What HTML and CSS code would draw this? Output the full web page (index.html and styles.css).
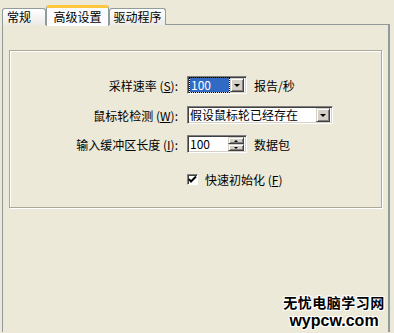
FILE: index.html
```html
<!DOCTYPE html>
<html lang="zh-CN">
<head>
    <meta charset="UTF-8">
    <meta name="viewport" content="width=device-width, initial-scale=1.0">
    <title>鼠标属性</title>
    <link rel="stylesheet" href="styles.css">
</head>
<body>
    <div class="tabs">
        <div class="tab first">常规</div>
        <div class="tab active">高级设置</div>
        <div class="tab last">驱动程序</div>
    </div>
    <div class="panel">
        <div class="group">
            <div class="row">
                <label class="label">采样速率 (<u>S</u>):</label>
                <div class="combo small">
                    <span class="value"><span class="sel">100</span></span>
                    <span class="drop"><i class="arrow-down"></i></span>
                </div>
                <span class="unit">报告/秒</span>
            </div>
            <div class="row">
                <label class="label">鼠标轮检测 (<u>W</u>):</label>
                <div class="combo wide">
                    <span class="value">假设鼠标轮已经存在</span>
                    <span class="drop"><i class="arrow-down"></i></span>
                </div>
            </div>
            <div class="row">
                <label class="label">输入缓冲区长度 (<u>I</u>):</label>
                <div class="combo small">
                    <span class="value">100</span>
                    <span class="spin">
                        <span class="spin-btn"><i class="arrow-up"></i></span>
                        <span class="spin-btn"><i class="arrow-down tiny"></i></span>
                    </span>
                </div>
                <span class="unit">数据包</span>
            </div>
            <div class="row check-row">
                <span class="checkbox">
                    <svg width="9" height="9" viewBox="0 0 9 9"><path d="M1 4 L3 6.5 L8 1.5" fill="none" stroke="#000" stroke-width="2"/></svg>
                </span>
                <span class="check-label">快速初始化 (<u>F</u>)</span>
            </div>
        </div>
    </div>
    <div class="watermark">
        <div class="wm-cn">无忧电脑学习网</div>
        <div class="wm-en">wypcw.com</div>
    </div>
</body>
</html>
```

FILE: styles.css
```css
body {
    margin: 0;
    width: 394px;
    height: 333px;
    overflow: hidden;
    position: relative;
    background-color: #ece9d8;
    font-family: "Noto Sans CJK SC", "DejaVu Sans", sans-serif;
    font-size: 12px;
    color: #000;
}

.tabs {
    display: flex;
    align-items: flex-end;
    height: 25px;
    padding-left: 2px;
    position: relative;
    z-index: 1;
}

.tab {
    height: 16px;
    line-height: 16px;
    box-sizing: content-box;
    border: 1px solid #919b9c;
    border-bottom: none;
    border-radius: 3px 3px 0 0;
    background: linear-gradient(#ffffff, #ecebe6);
    text-align: center;
}

.tab.first {
    width: 38px;
    padding-left: 4px;
    text-align: left;
}

.tab.last {
    width: 55px;
}

.tab.active {
    width: 61px;
    height: 18px;
    line-height: 18px;
    background-color: #fcfcfe;
    background-image: none;
    border-top: 3px solid #ffc83c;
    margin-bottom: -1px;
    position: relative;
    z-index: 2;
}

.panel {
    margin: -1px 4px 0 2px;
    height: 308px;
    border: 1px solid #919b9c;
    border-right: 2px solid #919b9c;
    border-bottom: none;
    padding-top: 25px;
    box-sizing: border-box;
}

.group {
    margin: 0 6px 0 6px;
    height: 158px;
    border: 1px solid #aca899;
    box-shadow: 1px 1px 0 #fff, inset 1px 1px 0 #fff;
    padding-top: 25px;
    box-sizing: border-box;
}

.row {
    display: flex;
    align-items: center;
    height: 18px;
    margin-bottom: 12px;
}

.row:nth-child(2) {
    margin-bottom: 11px;
}

.label {
    width: 177px;
    text-align: right;
    padding-right: 9px;
    box-sizing: border-box;
    white-space: nowrap;
}

.combo {
    display: flex;
    align-items: center;
    height: 18px;
    box-sizing: border-box;
    background-color: #fff;
    border: 1px solid;
    border-color: #7f7f7f #ffffff #ffffff #7f7f7f;
    box-shadow: inset 1px 1px 0 #404040, inset -1px -1px 0 #d4d0c8;
    padding: 2px;
}

.combo.small {
    width: 60px;
}

.combo.wide {
    width: 146px;
}

.value {
    flex: 1;
    line-height: 14px;
    white-space: nowrap;
}

.sel {
    display: block;
    background-color: #316ac5;
    color: #fff;
    outline: 1px dotted #000;
    margin-right: 1px;
    padding-left: 1px;
}

.drop, .spin-btn {
    display: flex;
    align-items: center;
    justify-content: center;
    background-color: #d4d0c8;
    border: 1px solid;
    border-color: #d4d0c8 #404040 #404040 #d4d0c8;
    box-shadow: inset 1px 1px 0 #fff, inset -1px -1px 0 #808080;
    box-sizing: border-box;
}

.drop {
    width: 14px;
    height: 14px;
}

.spin {
    display: flex;
    flex-direction: column;
    width: 16px;
    height: 14px;
}

.spin-btn {
    height: 7px;
}

.arrow-down {
    width: 0;
    height: 0;
    border-left: 3px solid transparent;
    border-right: 3px solid transparent;
    border-top: 3px solid #000;
}

.arrow-up {
    width: 0;
    height: 0;
    border-left: 2px solid transparent;
    border-right: 2px solid transparent;
    border-bottom: 2px solid #000;
}

.arrow-down.tiny {
    border-left-width: 2px;
    border-right-width: 2px;
    border-top-width: 2px;
}

.unit {
    margin-left: 7px;
}

.check-row {
    margin-top: 17px;
    padding-left: 177px;
}

.checkbox {
    width: 11px;
    height: 11px;
    box-sizing: border-box;
    background-color: #fff;
    border: 1px solid;
    border-color: #808080 #fff #fff #808080;
    box-shadow: inset 1px 1px 0 #404040;
    display: flex;
    align-items: center;
    justify-content: center;
}

.check-label {
    margin-left: 7px;
}

.watermark {
    position: absolute;
    left: 280px;
    top: 292px;
    width: 108px;
    text-align: center;
    font-weight: bold;
    color: #000;
    text-shadow: 1px 0 0 #fff, -1px 0 0 #fff, 0 1px 0 #fff, 0 -1px 0 #fff,
                 1px 1px 0 #fff, -1px -1px 0 #fff, 1px -1px 0 #fff, -1px 1px 0 #fff;
}

.wm-cn {
    font-size: 14px;
    line-height: 20px;
    letter-spacing: 0.5px;
}

.wm-en {
    font-family: "Liberation Sans", Arial, sans-serif;
    font-size: 16px;
    line-height: 18px;
}
```
